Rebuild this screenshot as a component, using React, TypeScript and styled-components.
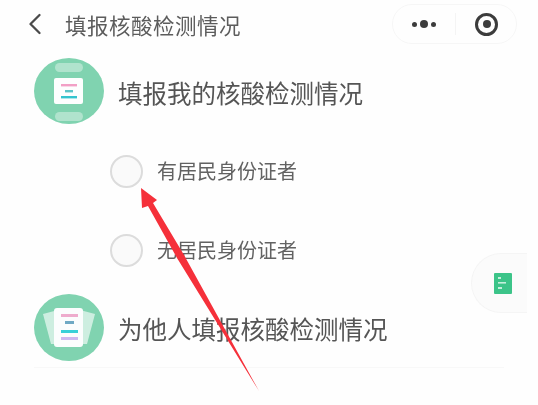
import styled, { createGlobalStyle } from "styled-components";
import { ChevronLeft } from "lucide-react";

const GlobalStyle = createGlobalStyle`
  html, body {
    margin: 0;
    padding: 0;
    background: #fefefe;
  }
  body {
    font-family: "Noto Sans CJK SC", "Liberation Sans", sans-serif;
  }
`;

function SelfIcon() {
  return (
    <svg width="70" height="66" viewBox="0 0 70 66">
      <ellipse cx="35" cy="33" rx="35" ry="33" fill="#80d3b0" />
      <rect x="21" y="5" width="28" height="9" rx="4.5" fill="#b0e3cd" />
      <rect x="21" y="54" width="28" height="9" rx="4.5" fill="#b0e3cd" />
      <rect x="20" y="20" width="29" height="26" rx="2" fill="#fdfefe" />
      <rect x="27" y="26" width="16" height="2.4" fill="#f2a0c6" />
      <rect x="31" y="32" width="8" height="2.4" fill="#5cc4c8" />
      <rect x="27" y="38" width="16" height="2.4" fill="#35c4cf" />
    </svg>
  );
}

function OthersIcon() {
  return (
    <svg width="70" height="67" viewBox="0 0 70 67">
      <ellipse cx="35" cy="33.5" rx="35" ry="33.5" fill="#80d3b0" />
      <path d="M9 20 L24 16 L24 50 L17 50 Z" fill="#cdeee0" />
      <path d="M61 20 L46 16 L46 50 L53 50 Z" fill="#cdeee0" />
      <rect x="20" y="14" width="29" height="39" rx="3" fill="#fbfdfd" />
      <rect x="27" y="20" width="17" height="3" fill="#eeaccd" />
      <rect x="31" y="27" width="9" height="3" fill="#6fa9c4" />
      <rect x="27" y="36" width="17" height="3" fill="#38d0d8" />
      <rect x="27" y="43" width="17" height="3" fill="#cdb8f0" />
    </svg>
  );
}

export default function App() {
  return (
    <Page>
      <GlobalStyle />
      <Header>
        <BackTitle>
          <ChevronLeft size={36} strokeWidth={1.5} color="#4a4a4a" />
          <PageTitle>填报核酸检测情况</PageTitle>
        </BackTitle>
        <Capsule>
          <MoreDots>
            <Dot $size={5} />
            <Dot $size={8} />
            <Dot $size={5} />
          </MoreDots>
          <CapsuleLine />
          <TargetIcon />
        </Capsule>
      </Header>

      <Choice>
        <SelfIcon />
        <ChoiceLabel>填报我的核酸检测情况</ChoiceLabel>
      </Choice>

      <Options>
        <Option>
          <Radio />
          <OptionLabel>有居民身份证者</OptionLabel>
        </Option>
        <Option>
          <Radio />
          <OptionLabel>无居民身份证者</OptionLabel>
        </Option>
      </Options>

      <Choice>
        <OthersIcon />
        <ChoiceLabel>为他人填报核酸检测情况</ChoiceLabel>
      </Choice>
      <Divider />

      <FloatButton>
        <svg width="18" height="21" viewBox="0 0 18 21">
          <rect width="18" height="21" rx="1" fill="#3cc489" />
          <rect x="4" y="4" width="3" height="2" fill="#c5efdc" />
          <rect x="4" y="9" width="8" height="1.6" fill="#c5efdc" />
          <rect x="4" y="14" width="4" height="2" fill="#c5efdc" />
        </svg>
      </FloatButton>

      <Arrow width="538" height="405" viewBox="0 0 538 405">
        <path
          d="M141 188 L157 200 L153 203 L184 255 L259 391 L177 258 L148 206 L142 208 Z"
          fill="#f5303a"
        />
      </Arrow>
    </Page>
  );
}

const Page = styled.div`
  position: relative;
  width: 538px;
  height: 405px;
  overflow: hidden;
  filter: blur(0.6px);
`;

const Header = styled.header`
  height: 52px;
  box-sizing: border-box;
  padding: 4px 21px 0 17px;
  margin-bottom: 6px;
  display: flex;
  align-items: flex-start;
  justify-content: space-between;
`;

const BackTitle = styled.div`
  height: 40px;
  display: flex;
  align-items: center;
  gap: 12px;
`;

const PageTitle = styled.h1`
  margin: 0;
  font-size: 21.5px;
  letter-spacing: 0.5px;
  font-weight: 400;
  color: #5c5c5c;
`;

const Capsule = styled.div`
  width: 125px;
  height: 40px;
  box-sizing: border-box;
  padding: 0 18px 0 19px;
  border: 1px solid #f6f6f6;
  border-radius: 20px;
  display: flex;
  align-items: center;
  justify-content: space-between;
`;

const MoreDots = styled.div`
  display: flex;
  align-items: center;
  gap: 3px;
`;

const Dot = styled.span<{ $size: number }>`
  width: ${({ $size }) => $size}px;
  height: ${({ $size }) => $size}px;
  border-radius: 50%;
  background: #3c3c3c;
`;

const CapsuleLine = styled.span`
  width: 1px;
  height: 22px;
  background: #f4f4f4;
`;

const TargetIcon = styled.span`
  width: 23px;
  height: 23px;
  box-sizing: border-box;
  border: 3px solid #3c3c3c;
  border-radius: 50%;
  display: flex;
  align-items: center;
  justify-content: center;

  &::after {
    content: "";
    width: 8px;
    height: 8px;
    border-radius: 50%;
    background: #3c3c3c;
  }
`;

const Choice = styled.section`
  margin-left: 34px;
  display: flex;
  align-items: center;
  gap: 14px;
`;

const ChoiceLabel = styled.h2`
  margin: 0;
  padding-top: 2px;
  font-size: 24.5px;
  font-weight: 400;
  color: #555;
`;

const Options = styled.div`
  padding: 31px 0 28px 110px;
  display: flex;
  flex-direction: column;
  gap: 47px;
`;

const Option = styled.label`
  height: 32px;
  display: flex;
  align-items: center;
  gap: 14px;
`;

const Radio = styled.span`
  width: 33px;
  height: 33px;
  box-sizing: border-box;
  border: 2px solid #dcdcdc;
  border-radius: 50%;
  background: #fafafa;
`;

const OptionLabel = styled.span`
  margin-top: -2px;
  font-size: 20px;
  color: #626262;
`;

const Divider = styled.div`
  height: 1px;
  margin: 6px 34px 0;
  background: #f8f8f8;
`;

const FloatButton = styled.div`
  position: absolute;
  top: 253px;
  left: 471px;
  width: 56px;
  height: 60px;
  box-sizing: border-box;
  padding-left: 22px;
  border: 1px solid #f5f5f5;
  border-right: none;
  border-radius: 30px 0 0 30px;
  background: #fbfbfb;
  display: flex;
  align-items: center;
`;

const Arrow = styled.svg`
  position: absolute;
  top: 0;
  left: 0;
`;
